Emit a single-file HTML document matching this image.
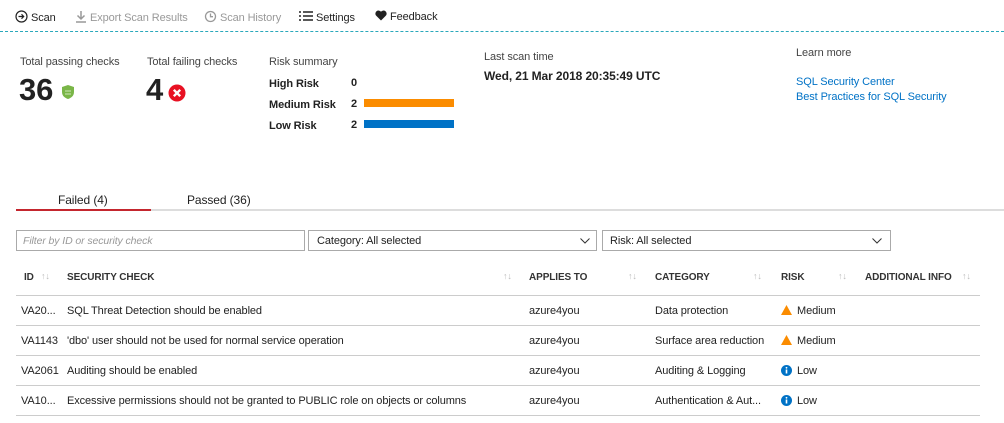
<!DOCTYPE html>
<html><head><style>
*{margin:0;padding:0;box-sizing:border-box}
body{width:1004px;height:423px;background:#fff;font-family:"Liberation Sans",sans-serif;font-size:11px;color:#222;position:relative;overflow:hidden;letter-spacing:-0.1px}
.a{position:absolute;white-space:nowrap}
.g{color:#999}
.b{font-weight:bold}
.lnk{color:#0072c6}
.hd{font-size:10px;font-weight:bold;color:#333}
.srt{color:#bbb;font-size:9px}
.line{position:absolute;left:16px;width:964px;height:1px;background:#ccc}
.box{position:absolute;height:21px;border:1px solid #aaa;top:230px}
</style></head><body>
<div class="a" style="top:10px;left:15px"><svg width="13" height="13" viewBox="0 0 13 13" style="vertical-align:-2px"><circle cx="6.5" cy="6.5" r="5.5" fill="none" stroke="#222" stroke-width="1.2"/><path d="M3.5 6.5h5M6.5 4.3l2.2 2.2-2.2 2.2" fill="none" stroke="#222" stroke-width="1.2"/></svg> Scan</div>
<div class="a g" style="top:10px;left:75px"><svg width="12" height="13" viewBox="0 0 12 13" style="vertical-align:-2px"><path d="M6 1v8M2.5 5.5 6 9l3.5-3.5M1 12h10" fill="none" stroke="#999" stroke-width="1.5"/></svg> Export Scan Results</div>
<div class="a g" style="top:10px;left:204px"><svg width="13" height="13" viewBox="0 0 13 13" style="vertical-align:-2px"><circle cx="6.5" cy="6.5" r="5" fill="none" stroke="#999" stroke-width="1.3"/><path d="M6.5 3.5v3.2h2.5" fill="none" stroke="#999" stroke-width="1.3"/></svg> Scan History</div>
<div class="a" style="top:10px;left:299px"><svg width="14" height="12" viewBox="0 0 14 12" style="vertical-align:-1px"><path d="M0 2h2M4 2h10M0 6h2M4 6h10M0 10h2M4 10h10" stroke="#222" stroke-width="1.6"/></svg> Settings</div>
<div class="a" style="top:10px;left:375px"><svg width="12" height="11" viewBox="0 0 12 11" style="vertical-align:-1px"><path d="M6 10.5 1 5.5A3 3 0 0 1 6 1.8 3 3 0 0 1 11 5.5z" fill="#222"/></svg> Feedback</div>
<div style="position:absolute;top:31px;left:0;width:1004px;border-top:1px dashed #2aa8bb"></div>

<div class="a" style="top:56px;left:20px;color:#444">Total passing checks</div>
<div class="a b" style="top:72px;left:19px;font-size:31px;color:#222">36</div>
<svg class="a" style="top:85px;left:62px" width="12" height="14" viewBox="0 0 12 14"><path d="M6 0 12 2v5c0 4-3 6-6 7-3-1-6-3-6-7V2z" fill="#7ab648"/><path d="M3 6h6M3 9h6" stroke="#cfe6b7" stroke-width="1"/></svg>
<div class="a" style="top:56px;left:147px;color:#444">Total failing checks</div>
<div class="a b" style="top:72px;left:146px;font-size:31px;color:#222">4</div>
<svg class="a" style="top:84px;left:168px" width="18" height="18" viewBox="0 0 18 18"><circle cx="9" cy="9" r="8.5" fill="#e81123"/><path d="M5.8 5.8l6.4 6.4M12.2 5.8l-6.4 6.4" stroke="#fff" stroke-width="2.4"/></svg>
<div class="a" style="top:56px;left:269px;color:#444">Risk summary</div>
<div class="a b" style="top:78px;left:269px">High Risk</div><div class="a b" style="top:77px;left:351px">0</div>
<div class="a b" style="top:99px;left:269px">Medium Risk</div><div class="a b" style="top:98px;left:351px">2</div>
<div class="a" style="top:99px;left:364px;width:90px;height:8px;background:#fb8c00"></div>
<div class="a b" style="top:120px;left:269px">Low Risk</div><div class="a b" style="top:119px;left:351px">2</div>
<div class="a" style="top:120px;left:364px;width:90px;height:8px;background:#0072c6"></div>
<div class="a" style="top:51px;left:484px;color:#444">Last scan time</div>
<div class="a b" style="top:69px;left:484px;font-size:12px">Wed, 21 Mar 2018 20:35:49 UTC</div>
<div class="a" style="top:47px;left:796px;color:#444">Learn more</div>
<div class="a lnk" style="top:76px;left:796px">SQL Security Center</div>
<div class="a lnk" style="top:91px;left:796px">Best Practices for SQL Security</div>

<div class="a" style="top:193px;left:58px;font-size:12px">Failed (4)</div>
<div class="a" style="top:193px;left:187px;font-size:12px">Passed (36)</div>
<div class="a" style="top:209px;left:16px;width:988px;height:2px;background:#ddd"></div>
<div class="a" style="top:209px;left:16px;width:135px;height:2px;background:#c4262e"></div>

<div class="box" style="left:16px;width:289px"><span class="a" style="left:6px;top:4px;color:#999;font-style:italic;font-size:10.5px">Filter by ID or security check</span></div>
<div class="box" style="left:308px;width:289px"><span class="a" style="left:8px;top:4px">Category: All selected</span><svg class="a" style="right:6px;top:7px" width="10" height="6"><path d="M0.5 0.5 5 5 9.5 0.5" fill="none" stroke="#333"/></svg></div>
<div class="box" style="left:602px;width:289px"><span class="a" style="left:7px;top:4px">Risk: All selected</span><svg class="a" style="right:8px;top:7px" width="10" height="6"><path d="M0.5 0.5 5 5 9.5 0.5" fill="none" stroke="#333"/></svg></div>

<div class="a hd" style="top:272px;left:24px">ID</div><div class="a srt" style="top:271px;left:41px">↑↓</div>
<div class="a hd" style="top:272px;left:67px">SECURITY CHECK</div><div class="a srt" style="top:271px;left:503px">↑↓</div>
<div class="a hd" style="top:272px;left:529px">APPLIES TO</div><div class="a srt" style="top:271px;left:628px">↑↓</div>
<div class="a hd" style="top:272px;left:655px">CATEGORY</div><div class="a srt" style="top:271px;left:753px">↑↓</div>
<div class="a hd" style="top:272px;left:781px">RISK</div><div class="a srt" style="top:271px;left:838px">↑↓</div>
<div class="a hd" style="top:272px;left:865px">ADDITIONAL INFO</div><div class="a srt" style="top:271px;left:962px">↑↓</div>
<div class="line" style="top:295px"></div>

<div class="a" style="top:305px;left:21px">VA20...</div><div class="a" style="top:305px;left:67px">SQL Threat Detection should be enabled</div><div class="a" style="top:305px;left:529px">azure4you</div><div class="a" style="top:305px;left:655px">Data protection</div>
<svg class="a" style="top:305px;left:781px" width="11" height="10"><path d="M5.5 0 11 10H0z" fill="#fb8c00"/></svg><div class="a" style="top:305px;left:797px">Medium</div>
<div class="line" style="top:325px"></div>
<div class="a" style="top:335px;left:21px">VA1143</div><div class="a" style="top:335px;left:67px">'dbo' user should not be used for normal service operation</div><div class="a" style="top:335px;left:529px">azure4you</div><div class="a" style="top:335px;left:655px">Surface area reduction</div>
<svg class="a" style="top:335px;left:781px" width="11" height="10"><path d="M5.5 0 11 10H0z" fill="#fb8c00"/></svg><div class="a" style="top:335px;left:797px">Medium</div>
<div class="line" style="top:355px"></div>
<div class="a" style="top:365px;left:21px">VA2061</div><div class="a" style="top:365px;left:67px">Auditing should be enabled</div><div class="a" style="top:365px;left:529px">azure4you</div><div class="a" style="top:365px;left:655px">Auditing &amp; Logging</div>
<svg class="a" style="top:365px;left:781px" width="11" height="11"><circle cx="5.5" cy="5.5" r="5.5" fill="#0072c6"/><path d="M5.5 4.5v4" stroke="#fff" stroke-width="1.6"/><circle cx="5.5" cy="2.8" r="0.9" fill="#fff"/></svg><div class="a" style="top:365px;left:797px">Low</div>
<div class="line" style="top:385px"></div>
<div class="a" style="top:395px;left:21px">VA10...</div><div class="a" style="top:395px;left:67px">Excessive permissions should not be granted to PUBLIC role on objects or columns</div><div class="a" style="top:395px;left:529px">azure4you</div><div class="a" style="top:395px;left:655px">Authentication &amp; Aut...</div>
<svg class="a" style="top:395px;left:781px" width="11" height="11"><circle cx="5.5" cy="5.5" r="5.5" fill="#0072c6"/><path d="M5.5 4.5v4" stroke="#fff" stroke-width="1.6"/><circle cx="5.5" cy="2.8" r="0.9" fill="#fff"/></svg><div class="a" style="top:395px;left:797px">Low</div>
<div class="line" style="top:415px"></div>
</body></html>
